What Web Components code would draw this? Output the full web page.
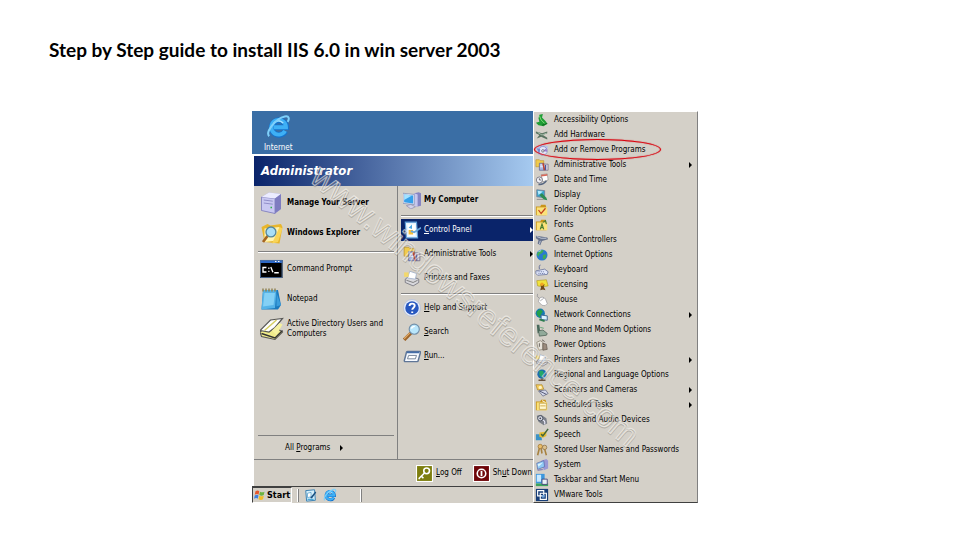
<!DOCTYPE html>
<html lang="en">
<head>
<meta charset="utf-8">
<title>Step by Step guide to install IIS 6.0</title>
<style>
  body {
    margin: 0;
    background: #fff;
    color: #000;
    font-family: "DejaVu Sans Condensed", "DejaVu Sans", sans-serif;
  }
</style>
</head>
<body>
<guide-page>
  <span slot="title">Step by Step guide to install IIS 6.0 in win server 2003</span>
  <win-desktop>
    <start-menu slot="start"></start-menu>
    <task-bar slot="taskbar"></task-bar>
    <control-panel-menu slot="submenu"></control-panel-menu>
  </win-desktop>
</guide-page>

<script>
// Drawings for the icons, all on a 16x16 grid
const folder = '<path d="M1 4h5l1-2h5l1 3v9H1z" fill="#c9951a"/><path d="M2 5h12v9H2z" fill="#fbe27a"/>';
const paperPrinter = '<path d="M2 9l4-3 8 3v3l-5 3-7-3z" fill="#d8d8dc" stroke="#6c6c76" stroke-width=".7"/><path d="M4 8l2-6 6 2-1 5z" fill="#fff" stroke="#8fa3c4" stroke-width=".6"/><path d="M3 10l6 2 4-2" fill="none" stroke="#777" stroke-width=".8"/><path d="M1 3h4v4H1z" fill="#f3d86b"/>';
const adminTools = '<path d="M1 2h4l1 1h4v7H1z" fill="#f0cb4e" stroke="#b98a1c" stroke-width=".6"/><path d="M5 6h5v8H5z" fill="#a9b6e0" stroke="#4a5591" stroke-width=".7"/><path d="M10 7h5v7h-5z" fill="#d7d3dd" stroke="#68607a" stroke-width=".7"/><path d="M6 8h3M6 10h3" stroke="#fff"/><path d="M9 6l2 8" stroke="#c2402c" stroke-width="1.6"/><path d="M12 8v6" stroke="#4a55a0" stroke-width="1.4"/>';
const globe = '<circle cx="8" cy="8" r="6.3" fill="#2b7ad0"/><path d="M4 4q4-3 6-1l-2 3-3 1-1 3-2-3z" fill="#3fae56"/><path d="M9 8l4-1-1 5-3 1z" fill="#3fae56"/><path d="M4 4l3-1" stroke="#bfe6ff"/>';
const ieLogo = '<path d="M12.400 11A4.700 4.700 0 1 1 13 8.500H5" fill="none" stroke="#1673cc" stroke-width="3.600"/><path d="M12.200 10.800A4.700 4.700 0 1 1 12.800 8.500H5" fill="none" stroke="#3eb0f5" stroke-width="2.500"/><path d="M5 5.800q3-3 6 0" stroke="#a8e2ff" fill="none"/><path d="M2 14.200C-.5 11.500 6 3 12 1.600c3-.6 3 1.600 1.800 3.400" fill="none" stroke="#7fd0fa" stroke-width="1.300"/>';

const icons = {
  ie: ieLogo,
  server: '<path d="M1 4l5-3 8 1v10l-4 3-9-2z" fill="#a9a6dc"/><path d="M1 4l9 1v10l-9-2z" fill="#c9c8f1" stroke="#7775b5" stroke-width=".5"/><path d="M1 4l5-3 8 1-4 3z" fill="#ececff"/><path d="M10 5l4-3v10l-4 3z" fill="#7e7cc0"/><path d="M2.500 6l6 .8M2.500 8l6 .8" stroke="#8a88c4" stroke-width=".6"/><path d="M7 11h1" stroke="#2ab24a"/>',
  explorer: '<path d="M1 4l4-2 2 1 7-1 1 2-2 11-10-1z" fill="#e8b62c"/><path d="M3 5l10-1-1 9-9 1z" fill="#fff3b0"/><path d="M13 4l2 1-3 9-4 1z" fill="#f8d458"/><path d="M5 10l-3 4" stroke="#a5641f" stroke-width="1.800"/><circle cx="7.300" cy="7.300" r="3.300" fill="#a8def7" stroke="#55869c" stroke-width=".9"/>',
  cmd: '<path d="M0 2h15v12H0z" fill="#000"/><path d="M0 2h15v2H0z" fill="#2e69c6"/><path d="M10 3h1M12 3h1" stroke="#fff" stroke-width=".8"/><path d="M4.300 7H2v3h2.300M5.500 7.500h.8M5.500 9.600h.8M7.200 6.700l1.400 3.500M9.500 10.500h3" fill="none" stroke="#fff" stroke-width=".9"/><path d="M.3 2.300h14.400v11.400H.3z" fill="none" stroke="#4e6f9f" stroke-width=".6"/>',
  notepad: '<path d="M2 2h10l2 10-2 3H1z" fill="#1b79bd"/><path d="M2 2h9l-1 12-9 1z" fill="#55b3e8"/><path d="M3 4h7l-1 8-7 1z" fill="#84d0f5"/><path d="M11 4l3 8-3 1z" fill="#3b9ddb"/><path d="M2 1v2M4 1v2M6 1v2M8 1v2M10 1v2" stroke="#8a7b49" stroke-width=".9"/>',
  directory: '<path d="M0 10l5-4 7 2 3 2-5 5-9-2z" fill="#efeb8b" stroke="#555" stroke-width=".7"/><path d="M0 9l7-7 8-1-5 6-4 3z" fill="#fff" stroke="#555" stroke-width=".8"/><path d="M3 9l8-7" stroke="#d4cd62"/><path d="M8 9l5-5 2 1-4 7z" fill="#f6f2a0"/><path d="M1 11l9 3 5-5" fill="none" stroke="#333" stroke-width=".9"/>',
  computer: '<path d="M10 2l4-1 2 1v11l-4 1z" fill="#8584c3"/><path d="M10 2l3 1v11l-3-1z" fill="#c7c7ee"/><path d="M0 2l10 1v9L0 11z" fill="#e2e6f7" stroke="#6779a8" stroke-width=".5"/><path d="M1 3l8 1v7l-8-1z" fill="#35a0ea"/><path d="M1 3l7 1-7 4z" fill="#a5e2ff"/><path d="M3 13l4-1 4 2-4 2z" fill="#d2d2e8" stroke="#7a7aa5" stroke-width=".5"/>',
  panel: '<path d="M2 1h10l1 14H3z" fill="#e5f3ff" stroke="#5d9dd8"/><path d="M4 3h7v10H5z" fill="#fff"/><path d="M5 6l3-3v4z" fill="#4aa8e6"/><path d="M5 8h4v4H5z" fill="#f6bf3c"/><path d="M7 9l3 1 6-4" fill="none" stroke="#69a9dc" stroke-width="1.500"/>',
  tools: adminTools,
  printer: paperPrinter,
  help: '<circle cx="8" cy="8" r="7.500" fill="#e9effa" stroke="#aab8d6" stroke-width=".6"/><circle cx="8" cy="8" r="6" fill="#2858c0"/><path d="M5.800 6.300c0-3 4.600-2.800 4.600-.2 0 1.600-2.200 1.700-2.200 3.500M8.200 11v1.500" fill="none" stroke="#fff" stroke-width="1.700"/>',
  search: '<path d="M7 9l-6 6" stroke="#9d6429" stroke-width="3"/><path d="M6 9l-5 5" stroke="#e2aa68"/><circle cx="10" cy="5.500" r="4.500" fill="#b9e6fb" stroke="#728fa9"/><path d="M7.500 5q.5-2 3-2" stroke="#fff" fill="none" stroke-width="1.300"/>',
  run: '<path d="M4 4h11q1 0 .5 1l-2 7q0 1-1 1H2q-1 0-.8-1L3 5q0-1 1-1z" fill="#f7faff" stroke="#5f7697" stroke-width="1.300"/><path d="M3.500 4.800h11" stroke="#456ea8" stroke-width="1.500"/><path d="M5 7.500h7l-1 3H4z" fill="#fff" stroke="#6d7d92" stroke-width=".8"/>',
  logoff: '<path d="M0 0h16v16H0z" fill="#fff"/><path d="M1 1h14v14H1z" fill="#7d7e0e"/><circle cx="10" cy="5.500" r="2.700" fill="none" stroke="#fff" stroke-width="1.500"/><path d="M8 7.500l-5 5v1M5 10.500l2 2" fill="none" stroke="#fff" stroke-width="1.500"/>',
  shutdown: '<path d="M0 0h16v16H0z" fill="#fff"/><path d="M1 1h14v14H1z" fill="#6e0508"/><circle cx="8" cy="8" r="4" fill="none" stroke="#fff" stroke-width="1.500"/><path d="M8 5.500v5" stroke="#fff" stroke-width="1.700"/>',
  flag: '<path d="M2 3q3-2 5 0L6 7.500q-2-2-5 0z" fill="#e5562b"/><path d="M8 3.500q3 1.500 6 0L13 8q-3 2-6 0z" fill="#6cb33f"/><path d="M1 8.500q3-2 5 0L5 13q-2-2-5 0z" fill="#3f7fdc"/><path d="M7 9q3 1.500 6 0l-1 4.500q-3 2-6 0z" fill="#f3bd26"/>',
  showdesk: '<path d="M2 3l10-1 1 12-10 1z" fill="#d7f0fb" stroke="#2a77ae"/><path d="M4 6l4-1v5l-4 1z" fill="#fff" stroke="#368abf" stroke-width=".7"/><path d="M7 11l6-7 1 1-5 7z" fill="#194f80"/><path d="M4 13h7" stroke="#4ba8d8" stroke-width="1.500"/>',
  access: '<path d="M5 2l4-1-1 4 4 4 2 3-4 3-6-1-3-3 4-1-1-4z" fill="#1f9d35"/><path d="M5 3l2 5 4 4" fill="none" stroke="#8be07f"/><path d="M8 14l6-2" stroke="#126a22" stroke-width="1.500"/>',
  hardware: '<path d="M1 4l7 2 6-2v2l-5 2 5 3v2L7 10l-5 2 3-4-4-2z" fill="#587260"/><path d="M3 5l5 3 5-2" fill="none" stroke="#aac3ae"/>',
  programs: '<path d="M1 5l7-3 7 2-3 9-8 1z" fill="#b6c3ec"/><circle cx="9" cy="9" r="5" fill="#e4e6f8" stroke="#7e88bd" stroke-width=".8"/><path d="M9 9l4-3 1 4z" fill="#9c7ad1"/><circle cx="9" cy="9" r="1.400" fill="#fff" stroke="#667"/><path d="M2 6l4 1-1 5z" fill="#7386d1"/>',
  date: '<path d="M7 2l7-1 1 7-6 2z" fill="#fff" stroke="#777" stroke-width=".6"/><path d="M7 2l7-1v2l-7 1z" fill="#d66a5a"/><circle cx="5" cy="8" r="3.500" fill="#f0f0f5" stroke="#767684"/><path d="M5 6v2h2" stroke="#333" fill="none" stroke-width=".7"/><path d="M4 13q5 1 9-4" fill="none" stroke="#566680" stroke-width="1.800"/>',
  display: '<path d="M2 2l9 1v8l-9-1z" fill="#3aa4cc" stroke="#71829b"/><path d="M3 3l6 1-5 4z" fill="#b5ecff"/><path d="M5 8l5 5 4 1-1-3-5-5z" fill="#2d8b53"/><path d="M2 13h8" stroke="#888"/>',
  folder: folder + '<path d="M4 8l3 4 5-6" fill="none" stroke="#c2401d" stroke-width="1.400"/>',
  fonts: folder + '<path d="M6 13l2-6 2 6M6.500 11h3M9 5l3-2 1 4" fill="none" stroke="#487c32" stroke-width="1.300"/>',
  game: '<path d="M1 3l6 1 7 1 1 2-7 2-2 5-3-2 1-4-3-2z" fill="#67728c"/><path d="M2 4l5 2 6 0M6 9l-1 4" stroke="#c9d1e0" fill="none"/>',
  globe: globe,
  keyboard: '<path d="M1 9l10-2 4 3-1 3-11 1-2-2z" fill="#dfe5f8" stroke="#596693" stroke-width=".8"/><path d="M3 10h8M4 12h8" stroke="#5b6b9d" stroke-dasharray="1 1"/><path d="M5 7q-1-3 1-5" fill="none" stroke="#596693"/>',
  licensing: '<path d="M2 3l11-1 2 7-6 1-6-1z" fill="#f1e23c" stroke="#a48c14" stroke-width=".6"/><path d="M6 7h5l-1 3 2 4-3-1-3 1 1-4z" fill="#70481a"/><circle cx="8" cy="7" r="2" fill="#f1a822"/>',
  mouse: '<path d="M5 6q4-3 7 1l2 5q-2 4-6 2L4 10z" fill="#fff" stroke="#8a8a90" stroke-width=".7"/><path d="M6 9l4-3M5 6Q1 4 3 1" fill="none" stroke="#8a8a90" stroke-width=".8"/>',
  network: '<circle cx="6" cy="6" r="5.300" fill="#1779b5"/><path d="M2 4l4-3 3 3-2 3-2 4-3-4z" fill="#23a04a"/><path d="M7 8l7 1v5l-7-1z" fill="#d9f2ff" stroke="#345f87"/><path d="M5 13l6 2" stroke="#2d7d50" stroke-width="2"/>',
  phone: '<path d="M2 2l3 0 1 8-3 2z" fill="#48695b"/><path d="M4 9l5-1 5 4-1 2-8 1z" fill="#91aa9a" stroke="#42584c" stroke-width=".8"/><path d="M6 5l4 1" stroke="#58a06e"/>',
  power: '<path d="M2 5l4-2 3 2v8l-5 1z" fill="#e6e2d9" stroke="#85806f" stroke-width=".8"/><path d="M9 6l4 1 1 6-5 1z" fill="#9b8c7e" stroke="#584d44" stroke-width=".7"/><path d="M5 6v4M8 2l3 2" stroke="#5c5650"/>',
  region: '<circle cx="8" cy="7" r="5.300" fill="#1c6cae"/><path d="M5 3l4 0 1 3-2 5-3-3z" fill="#25a765"/><path d="M4 14h8M8 12v2" stroke="#69533f" stroke-width="1.600"/>',
  scanner: '<path d="M1 2h7l2 5-7 1z" fill="#f4cd5a" stroke="#a77f23" stroke-width=".7"/><circle cx="6" cy="5" r="1.800" fill="#fff3c4"/><path d="M4 9l8-1 3 4-6 3z" fill="#d4d8ea" stroke="#5e637e" stroke-width=".8"/><path d="M5 9l8 4" stroke="#454966"/>',
  tasks: folder + '<path d="M5 6h8v7H5z" fill="#fff8d0" stroke="#b58d33" stroke-width=".7"/><path d="M6 9h6" stroke="#cda23b"/><path d="M8 3l4 2" stroke="#fff"/>',
  sound: '<path d="M2 3l5-1 6 4 1 6-4 2-6-4z" fill="#7c8089"/><circle cx="6" cy="6" r="3" fill="#d5d9e3" stroke="#444a58"/><circle cx="6" cy="6" r="1" fill="#445"/><path d="M9 8q3 1 2 5" fill="none" stroke="#eef" stroke-width="1.300"/>',
  speech: '<path d="M1 7l6 0 1 7-7 0z" fill="#3a92c6"/><path d="M5 5l8-1 0 5-4 2-4-1z" fill="#e5bd33"/><path d="M15 1l-6 8-2-2" fill="none" stroke="#41663a" stroke-width="1.700"/>',
  users: '<circle cx="6" cy="4" r="2.500" fill="#e9bd6a" stroke="#93641c" stroke-width=".7"/><circle cx="11" cy="5" r="2.500" fill="#dbc08e" stroke="#7e6030" stroke-width=".7"/><path d="M5 6l-2 8M7 6l1 6M11 7l2 7" stroke="#a7813e" stroke-width="1.800"/>',
  system: '<path d="M7 3l6-2 2 2v9l-5 2z" fill="#9a98d4"/><path d="M2 6l8-3 1 7-8 3z" fill="#8fcaf5" stroke="#5867a5" stroke-width=".8"/><path d="M3 7l6-2-5 5z" fill="#dff5ff"/><path d="M3 14l6-1" stroke="#8a88b9" stroke-width="1.500"/>',
  taskmenu: '<path d="M1 1h10v11H1z" fill="#3c97dd"/><path d="M2 2h5v8H2z" fill="#cbeaff"/><path d="M1 12h14v3H1z" fill="#3ba45d"/><path d="M8 7h6v6H8z" fill="#e7f0f6" stroke="#447"/>',
  vmware: '<path d="M1 1h14v14H1z" fill="#173d77"/><path d="M3 3h7v6H3zM6 6h7v7H6z" fill="none" stroke="#fff" stroke-width="1.300"/><path d="M8 8h3v3H8z" fill="#74a7de"/>'
};

function define(name, html, after) {
  const template = document.createElement('template');
  template.innerHTML = html;
  customElements.define(name, class extends HTMLElement {
    constructor() {
      super();
      this.attachShadow({ mode: 'open' }).appendChild(template.content.cloneNode(true));
    }
    connectedCallback() {
      if (after) after(this, this.shadowRoot);
    }
  });
}

/* Icon, sized by --size */
define('win-icon', `
<style>
  :host { display: block; flex: none; width: var(--size, 14px); height: var(--size, 14px); }
  svg { display: block; width: 100%; height: 100%; }
</style>
<svg viewBox="0 0 16 16" aria-hidden="true"></svg>
`, (el, root) => {
  root.querySelector('svg').innerHTML = icons[el.getAttribute('name')] || '';
});

/* Menu row: icon, label, optional arrow */
define('menu-item', `
<style>
  :host { display: block; }
  button {
    display: flex;
    align-items: center;
    gap: var(--item-gap, 5px);
    box-sizing: border-box;
    width: 100%;
    height: var(--item-height, 15px);
    padding: 0 var(--item-end, 5px) 0 var(--item-start, 1px);
    border: 0;
    background: none;
    color: inherit;
    font: inherit;
    line-height: 10px;
    text-align: left;
  }
  .label { flex: 1; white-space: var(--item-wrap, nowrap); }
  .arrow {
    display: none;
    border: 3px solid transparent;
    border-left-color: currentColor;
    border-right: 0;
  }
  :host([arrow]) .arrow { display: block; }
  :host([active]) button {
    border: solid transparent;
    border-width: 1px 0;
    background: #0a246a padding-box;
    color: #fff;
  }
  :host([bold]) button { font-weight: bold; }
</style>
<button type="button">
  <win-icon></win-icon>
  <span class="label"><slot></slot></span>
  <span class="arrow"></span>
</button>
`, (el, root) => {
  const icon = root.querySelector('win-icon');
  const fresh = document.createElement('win-icon');
  fresh.setAttribute('name', el.getAttribute('icon'));
  icon.replaceWith(fresh);
});

/* Start menu */
define('start-menu', `
<style>
  :host {
    display: flex;
    flex-direction: column;
    flex: 1;
    border-top: 2px solid #fff;
    border-left: 2px solid #fff;
    background: #d4d0c8;
  }
  h2 {
    margin: 0;
    padding: 0 7px;
    background: linear-gradient(to right, #0a246a, #a6caf0);
    color: #fff;
    font: italic bold 13px/30px "DejaVu Sans Condensed", sans-serif;
  }
  .columns { display: grid; grid-template-columns: 144fr 135fr; flex: 1; }
  .left, .right { display: flex; flex-direction: column; min-width: 0; padding-top: 2px; }
  .left { --size: 24px; --item-height: 30px; --item-gap: 3px; --item-start: 2px; padding-left: 4px; padding-right: 3px; border-right: 1px solid #808080; }
  .right { --size: 18px; --item-height: 24px; --item-gap: 3px; --item-start: 2px; --item-end: 0px; padding-left: 3px; }
  .two-lines { --item-wrap: normal; }
  hr { width: 100%; box-sizing: border-box; margin: 3px 0 1px; border: 0; border-top: 1px solid #808080; border-bottom: 1px solid #fff; }
  .all { margin-top: auto; }
  .all hr { margin: 0; border-bottom: 0; }
  .all button { display: flex; align-items: center; gap: 10px; height: 23px; padding: 0 0 0 27px; border: 0; background: none; font: inherit; }
  .all i { border: 3px solid transparent; border-left-color: #000; border-right: 0; }
  footer {
    display: flex;
    align-items: center;
    justify-content: flex-end;
    gap: 8px;
    height: 26px;
    border-top: 1px solid #808080;
    --size: 17px;
    --item-gap: 3px;
    --item-end: 1px;
    --item-start: 2px;
  }
</style>
<h2>Administrator</h2>
<div class="columns">
  <div class="left">
    <menu-item icon="server" bold>Manage Your Server</menu-item>
    <menu-item icon="explorer" bold>Windows Explorer</menu-item>
    <hr>
    <menu-item icon="cmd">Command Prompt</menu-item>
    <menu-item icon="notepad">Notepad</menu-item>
    <menu-item icon="directory" class="two-lines">Active Directory Users and Computers</menu-item>
    <div class="all">
      <hr>
      <button type="button"><span>All <u>P</u>rograms</span><i></i></button>
    </div>
  </div>
  <div class="right">
    <menu-item icon="computer" bold>My Computer</menu-item>
    <hr>
    <menu-item icon="panel" active arrow><u>C</u>ontrol Panel</menu-item>
    <menu-item icon="tools" arrow>Administrative Tools</menu-item>
    <menu-item icon="printer">Printers and Faxes</menu-item>
    <hr>
    <menu-item icon="help"><u>H</u>elp and Support</menu-item>
    <menu-item icon="search"><u>S</u>earch</menu-item>
    <menu-item icon="run"><u>R</u>un...</menu-item>
  </div>
</div>
<footer>
  <menu-item icon="logoff"><u>L</u>og Off</menu-item>
  <menu-item icon="shutdown">Sh<u>u</u>t Down</menu-item>
</footer>
`);

/* Taskbar */
define('task-bar', `
<style>
  :host {
    display: flex;
    align-items: center;
    gap: 5px;
    height: 16px;
    border-top: 1px solid #404040;
    background: #d4d0c8;
  }
  button { padding: 0; border: 0; background: none; font: inherit; }
  .start {
    display: flex;
    align-items: center;
    gap: 1px;
    box-sizing: border-box;
    height: 16px;
    padding: 0 1px;
    border: 1px solid;
    border-color: #404040 #fff #fff #404040;
    font-weight: bold;
    font-size: 9px;
  }
  .grip { width: 1px; height: 13px; border-left: 1px solid #fff; background: #808080; }
  .end { margin-left: 18px; }
</style>
<button type="button" class="start"><win-icon name="flag" style="--size: 12px"></win-icon><span>Start</span></button>
<span class="grip"></span>
<button type="button" aria-label="Show Desktop"><win-icon name="showdesk"></win-icon></button>
<button type="button" aria-label="Internet Explorer"><win-icon name="ie"></win-icon></button>
<span class="grip end"></span>
`);

/* Control Panel submenu */
const entries = [
  ['access', 'Accessibility Options'],
  ['hardware', 'Add Hardware'],
  ['programs', 'Add or Remove Programs', 'ring'],
  ['tools', 'Administrative Tools', 'arrow'],
  ['date', 'Date and Time'],
  ['display', 'Display'],
  ['folder', 'Folder Options'],
  ['fonts', 'Fonts'],
  ['game', 'Game Controllers'],
  ['globe', 'Internet Options'],
  ['keyboard', 'Keyboard'],
  ['licensing', 'Licensing'],
  ['mouse', 'Mouse'],
  ['network', 'Network Connections', 'arrow'],
  ['phone', 'Phone and Modem Options'],
  ['power', 'Power Options'],
  ['printer', 'Printers and Faxes', 'arrow'],
  ['region', 'Regional and Language Options'],
  ['scanner', 'Scanners and Cameras', 'arrow'],
  ['tasks', 'Scheduled Tasks', 'arrow'],
  ['sound', 'Sounds and Audio Devices'],
  ['speech', 'Speech'],
  ['users', 'Stored User Names and Passwords'],
  ['system', 'System'],
  ['taskmenu', 'Taskbar and Start Menu'],
  ['vmware', 'VMware Tools']
];

define('control-panel-menu', `
<style>
  :host {
    display: block;
    border: 1px solid #fff;
    border-right-color: #808080;
    border-bottom-color: #404040;
    background: #d4d0c8;
  }
  .row { position: relative; }
  .ring {
    position: absolute;
    top: -3px;
    left: 0;
    width: 127px;
    height: 21px;
    box-sizing: border-box;
    border: 1px solid #d8000c;
    border-radius: 50%;
    box-shadow: inset 0 0 1px #d8000c, 0 0 1px #d8000c;
  }
</style>
`, (el, root) => {
  for (const [icon, label, flag] of entries) {
    const row = document.createElement('div');
    row.className = 'row';
    row.innerHTML = `<menu-item icon="${icon}" ${flag === 'arrow' ? 'arrow' : ''}>${label}</menu-item>`;
    if (flag === 'ring') row.innerHTML += '<span class="ring"></span>';
    root.appendChild(row);
  }
});

/* Desktop with the open menus */
define('win-desktop', `
<style>
  :host {
    position: relative;
    display: grid;
    grid-template-columns: 281fr 165fr;
    overflow: hidden;
    font-size: 8px;
    line-height: 10px;
  }
  .main { display: flex; flex-direction: column; min-width: 0; background: #3a6ea5; }
  .shortcut {
    display: flex;
    flex-direction: column;
    align-items: center;
    align-self: flex-start;
    height: 43px;
    padding: 3px 12px 0;
    box-sizing: border-box;
    color: #fff;
    text-decoration: none;
    gap: 4px;
    --size: 25px;
  }
  .watermark { position: absolute; inset: 0; width: 100%; height: 100%; pointer-events: none; }
  text { font-family: "Liberation Sans", Arial, sans-serif; font-size: 33px; text-anchor: middle; fill: none; }
</style>
<div class="main">
  <a class="shortcut" href="#internet"><win-icon name="ie"></win-icon>Internet</a>
  <slot name="start"></slot>
  <slot name="taskbar"></slot>
</div>
<slot name="submenu"></slot>
<svg class="watermark" viewBox="0 0 446 392" aria-hidden="true">
  <g transform="translate(216 203) rotate(40)">
    <text x="1" y="1" stroke="#8c8880" stroke-opacity=".45" stroke-width="1">www.windowsreference.com</text>
    <text stroke="#f4f2ee" stroke-opacity=".65" stroke-width="1">www.windowsreference.com</text>
  </g>
</svg>
`);

define('guide-page', `
<style>
  :host { display: block; }
  h1 { margin: 0; padding: 37px 49px 49px; font: bold 19px/25px Lato, sans-serif; }
  main { display: grid; grid-template-columns: 252fr 446fr 262fr; }
  ::slotted(win-desktop) { grid-column: 2; }
</style>
<h1><slot name="title"></slot></h1>
<main><slot></slot></main>
`);
</script>
</body>
</html>
